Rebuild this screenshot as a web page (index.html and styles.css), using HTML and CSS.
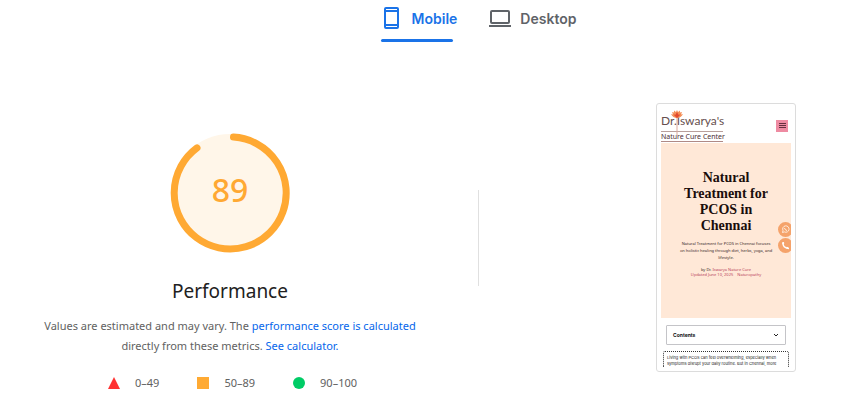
FILE: index.html
```html
<!DOCTYPE html>
<html lang="en">
<head>
<meta charset="utf-8">
<title>Performance report</title>
<link rel="stylesheet" href="styles.css">
</head>
<body>
<nav class="tabs" role="tablist">
  <button class="tab tab-active" role="tab" aria-selected="true">
    <svg width="23" height="24" viewBox="0 0 23 24" aria-hidden="true"><path fill="currentColor" fill-rule="evenodd" d="M5 1h11a2 2 0 0 1 2 2v18a2 2 0 0 1-2 2H5a2 2 0 0 1-2-2V3a2 2 0 0 1 2-2zm0 2v1h11V3zm0 3v12h11V6zm0 14v1h11v-1z"/></svg>
    Mobile
  </button>
  <button class="tab" role="tab" aria-selected="false">
    <svg width="24" height="24" viewBox="0 0 24 24" aria-hidden="true"><path fill="currentColor" fill-rule="evenodd" d="M4 4h16a2 2 0 0 1 2 2v10a2 2 0 0 1-2 2H4a2 2 0 0 1-2-2V6a2 2 0 0 1 2-2zm0 2v10h16V6zM1 19h22v2H1z"/></svg>
    Desktop
  </button>
</nav>
<main class="report">
  <section class="score">
    <div class="gauge">
      <svg class="ring" width="120" height="120" viewBox="0 0 120 120" aria-hidden="true">
        <circle cx="60" cy="60" r="59" fill="#fff6e9"/>
        <path d="M63.5 4.1A56 56 0 1 1 27 14.9" fill="none" stroke="#ffa933" stroke-width="7" stroke-linecap="round"/>
      </svg>
      <span class="value">89</span>
    </div>
    <h1 class="title">Performance</h1>
    <p class="note">Values are estimated and may vary. The <a href="#score">performance score is calculated</a><br>directly from these metrics. <a href="#calculator">See calculator.</a></p>
    <ul class="legend">
      <li><svg width="12" height="12" aria-hidden="true"><path d="M6 0l6 12H0z" fill="#f33"/></svg>0–49</li>
      <li><svg width="12" height="12" aria-hidden="true"><path d="M0 0h12v12H0z" fill="#fa3"/></svg>50–89</li>
      <li><svg width="12" height="12" aria-hidden="true"><circle cx="6" cy="6" r="6" fill="#0c6"/></svg>90–100</li>
    </ul>
  </section>
  <div class="divider"></div>
  <section class="preview">
    <div class="phone">
      <header class="site-head">
        <div class="logo">
          <svg class="flower" width="14" height="30" viewBox="0 0 14 30" aria-hidden="true"><path d="M7 8v18" stroke="#dba99c" stroke-width="1"/><path d="M7 9Q3 9 1 5l2 .5L2 3l2 .5L4 1.500 6 3l1-2 1 2 2-1.500v2l2-.5-1 2.500 2-.5Q11 9 7 9z" fill="#f59058"/><path d="M7 9L3.500 5.500l2 .3L7 3l1.500 2.800 2-.3z" fill="#e34a2e"/></svg>
          <span class="brand">Dr.Iswarya's</span>
          <span class="tagline">Nature Cure Center</span>
        </div>
        <button class="burger" aria-label="Menu"><svg width="12" height="12" viewBox="0 0 12 12" aria-hidden="true"><path d="M3 3.500h7M3 5.500h7M3 7.500h7" stroke="#66303f"/></svg></button>
      </header>
      <article class="hero">
        <h2>Natural<br>Treatment for<br>PCOS in<br>Chennai</h2>
        <p class="lead">Natural Treatment for PCOS in Chennai focuses<br>on holistic healing through diet, herbs, yoga, and<br>lifestyle.</p>
        <p class="byline">by Dr. <span>Iswarya Nature Cure</span><br><span>Updated June 10, 2025 &nbsp;&nbsp; Naturopathy</span></p>
        <div class="contact">
          <svg width="13" height="15" viewBox="0 0 13 15" aria-hidden="true"><circle cx="7.5" cy="7.5" r="7.5" fill="#f5a36b"/><path d="M4.500 10.500l.5-2a3.200 3.200 0 1 1 1.400 1.400z" fill="none" stroke="#fff3e8" stroke-width=".9"/><path d="M6.500 6q.3 2 2.500 2.500" fill="none" stroke="#fff3e8"/></svg>
          <svg width="13" height="15" viewBox="0 0 13 15" aria-hidden="true"><circle cx="7.500" cy="7.500" r="7.500" fill="#f5a36b"/><path d="M5 4.500q-.5 5.500 6 6" fill="none" stroke="#fff" stroke-width="1.500"/><path d="M4.300 5.300l1.800-.5M9 10.800l.5-1.800" stroke="#fff" stroke-width="1.600"/></svg>
        </div>
      </article>
      <button class="contents">Contents<svg width="6" height="6" viewBox="0 0 6 6" aria-hidden="true"><path d="M1 2l2 2 2-2" fill="none" stroke="#222"/></svg></button>
      <div class="excerpt">Living with PCOS can feel overwhelming, especially when<br>symptoms disrupt your daily routine. But in Chennai, more</div>
    </div>
  </section>
</main>
</body>
</html>
```
FILE: styles.css
```css
* { box-sizing: border-box; }
body { margin: 0; background: #fff; color: #212121; font-family: "Noto Sans", "Open Sans", sans-serif; }
h1, h2, p, ul { margin: 0; padding: 0; font-weight: 400; }
button { border: 0; background: none; padding: 0; font: inherit; color: inherit; }
svg { display: block; flex: none; }

.tabs { display: flex; justify-content: center; gap: 31px; padding-left: 112px; }
.tab { position: relative; display: flex; align-items: center; gap: 8px; height: 42px; padding-bottom: 6px; font: 600 14px Inter, sans-serif; color: #5f6368; }
.tab-active { color: #1a73e8; }
.tab-active::after { content: ""; position: absolute; left: 0; right: 4px; bottom: 0; height: 3px; border-radius: 2px; background: #1a73e8; }

.report { display: grid; grid-template-columns: 478fr 1px 366fr; padding-top: 61px; }
.score { display: flex; flex-direction: column; align-items: center; padding: 30px 18px 0 0; }
.gauge { display: grid; place-items: center; }
.gauge > * { grid-area: 1 / 1; }
.value { font-size: 32px; font-weight: 500; line-height: 32px; color: #ffa933; padding-bottom: 6px; }
.title { font-size: 19px; line-height: 28px; margin-top: 24px; }
.note { margin-top: 11px; font-size: 11px; line-height: 20px; color: #616161; text-align: center; white-space: nowrap; }
.note a { color: #0666eb; text-decoration: none; }
.legend { display: flex; gap: 38px; margin-top: 17px; padding-left: 5px; list-style: none; font-size: 11px; line-height: 20px; color: #616161; }
.legend li { display: flex; align-items: center; gap: 15px; }
.divider { height: 96px; margin-top: 87px; background: #e0e0e0; }

.preview { display: flex; justify-content: center; padding-left: 128px; }
.phone { width: 140px; height: 269px; padding: 4px; border: 1px solid #dcdcdc; border-radius: 3px; overflow: hidden; }
.site-head { display: flex; justify-content: space-between; align-items: center; height: 35px; padding-right: 3px; }
.logo { position: relative; display: flex; flex-direction: column; padding-top: 2px; }
.flower { position: absolute; left: 9px; top: 0; }
.brand { font: 400 12px/20px Lato, sans-serif; color: #66504e; }
.tagline { width: 62px; border-top: 1px solid #b9a09c; border-bottom: 1px solid #b08a86; font: 7px/9px "Noto Sans", sans-serif; color: #4e2f35; white-space: nowrap; }
.burger { background: #ee8ba2; }
.hero { position: relative; height: 175px; padding-top: 27px; background: #ffe8d7; text-align: center; white-space: nowrap; }
.hero h2 { font: 700 14px/16px "Liberation Serif", serif; color: #1a0d0b; }
.lead { margin-top: 6px; font-size: 4px; line-height: 7px; color: #33231f; }
.byline { margin-top: 6px; font-size: 4px; line-height: 5px; color: #33231f; }
.byline span { color: #b8405a; }
.contact { position: absolute; right: 0; top: 79px; display: grid; gap: 1px; }
.contents { display: flex; justify-content: space-between; align-items: center; width: 120px; height: 20px; margin: 7px 5px 0; padding: 0 6px; border: 1px solid #c4c4c8; border-radius: 1px; font: 700 5px Inter, sans-serif; color: #111; }
.excerpt { margin: 6px 2px 0; padding: 3px 3px 0; border: 1px dotted #333; border-bottom: 0; border-radius: 2px 2px 0 0; font: 4px/6px Inter, sans-serif; color: #222; white-space: nowrap; }
```
